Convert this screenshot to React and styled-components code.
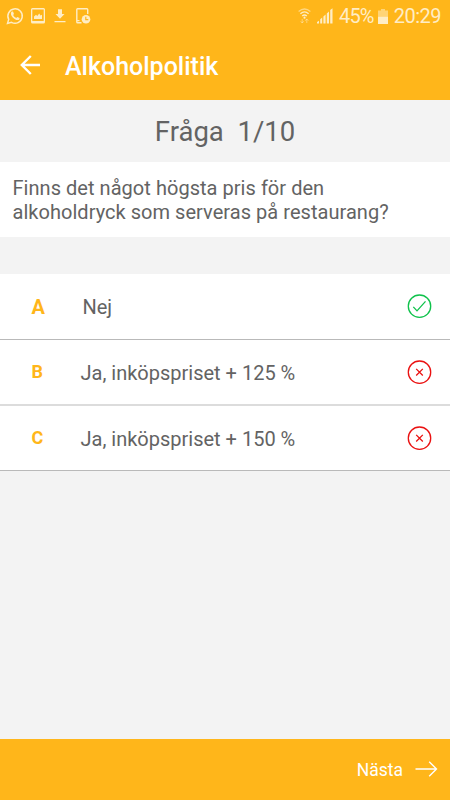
import React from 'react';
import styled, { createGlobalStyle } from 'styled-components';

const GlobalStyle = createGlobalStyle`
    * {
        box-sizing: border-box;
    }
    body {
        margin: 0;
        font-family: Roboto, sans-serif;
    }
`;
const Screen = styled.div`
    width: 450px;
    height: 800px;
    display: flex;
    flex-direction: column;
    overflow: hidden;
    background-color: #f3f3f3;
    color: #636363;
`;
const StatusBar = styled.div`
    height: 32px;
    display: flex;
    align-items: center;
    justify-content: space-between;
    padding: 0 9px 0 6px;
    background-color: #ffb61a;
    color: #ffedc5;
`;
const StatusGroup = styled.div`
    display: flex;
    align-items: center;
`;
const StatusIcon = styled.svg`
    display: block;
    flex: none;
    margin-left: ${props => props.$gap || 0}px;
`;
const Battery = styled.span`
    margin-left: 6px;
    font-size: 20px;
    line-height: 32px;
    letter-spacing: -0.8px;
`;
const Clock = styled.span`
    margin-left: 6px;
    font-size: 20px;
    line-height: 32px;
    letter-spacing: -0.5px;
`;
const AppBar = styled.header`
    height: 68px;
    display: flex;
    align-items: center;
    padding: 0 20px;
    background-color: #ffb61a;
    color: #fff;
`;
const IconButton = styled.button`
    display: flex;
    margin-bottom: 2px;
    padding: 0;
    border: 0;
    background: none;
    color: inherit;
    cursor: pointer;
`;
const Title = styled.h1`
    margin: 2px 0 0 25px;
    font-size: 25px;
    font-weight: 500;
    line-height: 30px;
`;
const Progress = styled.div`
    height: 62px;
    padding-top: 15px;
    font-size: 27.5px;
    line-height: 34px;
    text-align: center;
    white-space: pre;
`;
const Question = styled.p`
    height: 75px;
    margin: 0 0 37px;
    padding: 14px 12px 0 12.5px;
    background-color: #fff;
    font-size: 20px;
    line-height: 24px;
    letter-spacing: 0.04px;
`;
const AnswerList = styled.ul`
    margin: 0;
    padding: 0;
    list-style-type: none;
`;
const Answer = styled.li`
    height: ${props => props.$height}px;
    display: flex;
    align-items: center;
    padding: 0 18px 0 31.5px;
    border-bottom: ${props => (props.$soft ? '2px solid #dcdcdc' : '1px solid #b9b9b9')};
    background-color: #fff;
    cursor: pointer;
`;
const Letter = styled.span`
    width: ${props => (props.$large ? 51 : 49)}px;
    color: #ffb61a;
    font-size: ${props => (props.$large ? 20 : 18)}px;
    font-weight: 700;
    line-height: 24px;
`;
const AnswerText = styled.span`
    flex: 1;
    padding-top: 1px;
    font-size: 20px;
    line-height: 24px;
`;
const ResultIcon = styled.svg`
    display: block;
    flex: none;
    color: ${props => (props.$correct ? '#0fc24b' : '#ea1111')};
`;
const Footer = styled.footer`
    height: 61px;
    display: flex;
    align-items: center;
    justify-content: flex-end;
    margin-top: auto;
    padding: 0 12px 1px 0;
    background-color: #ffb61a;
    color: #fff;
`;
const Next = styled.button`
    display: flex;
    align-items: center;
    gap: 12px;
    padding: 0;
    border: 0;
    background: none;
    color: inherit;
    font-family: inherit;
    font-size: 17.5px;
    line-height: 24px;
    cursor: pointer;
`;
const NextLabel = styled.span`
    padding-top: 2px;
`;

const answers = [
    { letter: 'A', text: 'Nej', correct: true, height: 66 },
    { letter: 'B', text: 'Ja, inköpspriset + 125 %', soft: true, height: 66 },
    { letter: 'C', text: 'Ja, inköpspriset + 150 %', height: 65 },
];

const Result = ({ correct }) => (
    <ResultIcon $correct={correct} width="25" height="25" viewBox="0 0 25 25" fill="none" stroke="currentColor" strokeWidth="1.3">
        <circle cx="12.5" cy="12.2" r="11.2" />
        {correct ? <path d="M6.3 12.9 10 16.9 18.5 7.4" /> : <path d="M9.2 8.9 15.8 15.5M15.8 8.9 9.2 15.5" />}
    </ResultIcon>
);

const App = () => {
    return (
        <>
            <GlobalStyle />
            <Screen>
                <StatusBar>
                    <StatusGroup>
                        <StatusIcon width="18" height="18" viewBox="0 0 18 18" fill="none" stroke="currentColor" strokeWidth="1.5">
                            <path d="M1.5 16.4 2.7 12.4A7.2 7.2 0 1 1 5.5 15.3Z" />
                            <path d="M5.7 4.6 7 4.5 8 7 7.1 8.1Q8 10 10.2 11L11.3 9.9 13.6 11 13.3 12.4Q11.8 14 8.6 11.9 4.9 9.5 4.9 6.5 4.9 5.4 5.7 4.6Z" fill="currentColor" stroke="none" />
                        </StatusIcon>
                        <StatusIcon $gap={7} width="14" height="16" viewBox="0 0 14 16">
                            <path d="M1.5 0H12.5Q14 0 14 1.5V14Q14 15.5 12.5 15.5H1.5Q0 15.5 0 14V1.5Q0 0 1.5 0ZM1.3 1.4V13H12.7V1.4Z" fill="currentColor" fillRule="evenodd" />
                            <path d="M3 11V8.5L5 6.8 6.3 8 8.2 5.5 9.5 7.5 11 6.8V11Z" fill="currentColor" />
                        </StatusIcon>
                        <StatusIcon $gap={9} width="12" height="14" viewBox="0 0 12 14" fill="currentColor">
                            <path d="M4 0.3H8V5H10.5L6 9.8 1.5 5H4ZM0.5 12H11.5V13.3H0.5Z" />
                        </StatusIcon>
                        <StatusIcon $gap={10} width="15" height="16" viewBox="0 0 15 16">
                            <path d="M5.5 14.8H1.6Q0.8 14.8 0.8 14V1.6Q0.8 0.8 1.6 0.8H10.9Q11.7 0.8 11.7 1.6V6M0.8 12.6H3.5" fill="none" stroke="currentColor" strokeWidth="1.4" />
                            <circle cx="10" cy="11.3" r="4.3" fill="currentColor" />
                            <path d="M9.8 8.7V11.6H12.3" fill="none" stroke="#ffb61a" strokeWidth="1.2" />
                        </StatusIcon>
                    </StatusGroup>
                    <StatusGroup>
                        <StatusIcon width="13" height="16" viewBox="0 0 13 16" fill="none" stroke="currentColor" strokeWidth="1.3">
                            <path d="M0.6 3.4Q6.5-1.4 12.4 3.4" opacity="0.6" />
                            <path d="M2.4 5.7Q6.5 2.2 10.6 5.7M4.2 8Q6.5 6 8.8 8" />
                            <circle cx="6.5" cy="9.7" r="1.1" fill="currentColor" stroke="none" />
                            <path d="M4.2 15V11M2.7 13.3 4.2 15 5.7 13.3M8.8 11V15M7.3 12.7 8.8 11 10.3 12.7" opacity="0.5" strokeWidth="1" />
                        </StatusIcon>
                        <StatusIcon $gap={6} width="16" height="16" viewBox="0 0 16 16" fill="currentColor">
                            <path d="M0 15.5V14L2 12.8V15.5ZM3.2 15.5V11.3L5.2 9.5V15.5ZM6.4 15.5V8.5L8.6 6.5V15.5ZM9.8 15.5V5.5L12 3.5V15.5ZM13.2 15.5V2L15.5 0.2V15.5Z" />
                        </StatusIcon>
                        <Battery>45%</Battery>
                        <StatusIcon $gap={4} width="10" height="15" viewBox="0 0 10 15" fill="currentColor">
                            <path d="M3 0H7V1.5H10V7.5H0V1.5H3Z" opacity="0.55" />
                            <path d="M0 7.5H10V15H0Z" />
                        </StatusIcon>
                        <Clock>20:29</Clock>
                    </StatusGroup>
                </StatusBar>
                <AppBar>
                    <IconButton aria-label="Tillbaka">
                        <svg width="20" height="20" viewBox="0 0 20 20" fill="none" stroke="currentColor" strokeWidth="2.4">
                            <path d="M20 10H2M10.8 1 1.8 10 10.8 19" />
                        </svg>
                    </IconButton>
                    <Title>Alkoholpolitik</Title>
                </AppBar>
                <Progress>Fråga  1/10</Progress>
                <Question>
                    Finns det något högsta pris för den<br />
                    alkoholdryck som serveras på restaurang?
                </Question>
                <AnswerList>
                    {answers.map(answer => (
                        <Answer key={answer.letter} $height={answer.height} $soft={answer.soft}>
                            <Letter $large={answer.correct}>{answer.letter}</Letter>
                            <AnswerText>{answer.text}</AnswerText>
                            <Result correct={answer.correct} />
                        </Answer>
                    ))}
                </AnswerList>
                <Footer>
                    <Next>
                        <NextLabel>Nästa</NextLabel>
                        <svg width="23" height="16" viewBox="0 0 23 16" fill="none" stroke="currentColor" strokeWidth="1.4">
                            <path d="M0.5 8H21.5M14.2 0.7 21.5 8 14.2 15.3" />
                        </svg>
                    </Next>
                </Footer>
            </Screen>
        </>
    );
};

export default App;
